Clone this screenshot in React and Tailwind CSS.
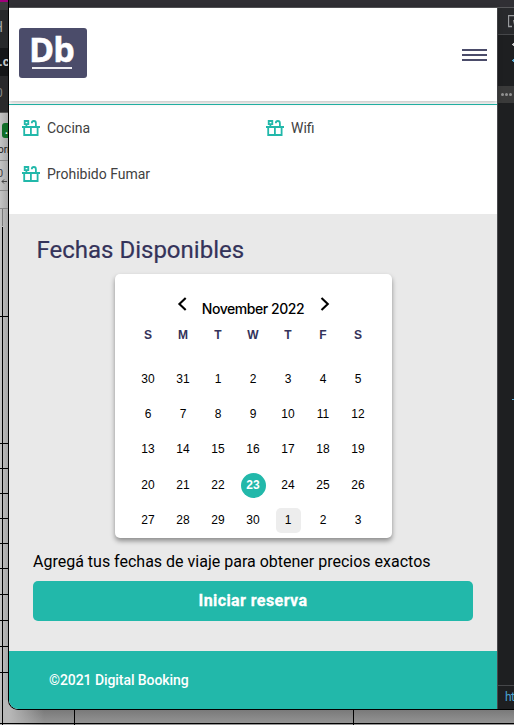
import React from "react";

const amenities = ["Cocina", "Wifi", "Prohibido Fumar"];
const weekdays = ["S", "M", "T", "W", "T", "F", "S"];
const weeks = [
  [30, 31, 1, 2, 3, 4, 5],
  [6, 7, 8, 9, 10, 11, 12],
  [13, 14, 15, 16, 17, 18, 19],
  [20, 21, 22, 23, 24, 25, 26],
  [27, 28, 29, 30, 1, 2, 3],
];

function Gift() {
  return (
    <svg width="18" height="16" viewBox="0 0 18 16" fill="none" stroke="#22b8aa" strokeWidth="1.8" className="shrink-0">
      <path d="M0 7h18" strokeWidth="2" />
      <path d="M2.2 7v8h13.4V7M8.9 7v8" />
      <path d="M2.7 1h3.6v3.2H2.7zM4.4 4v3M9.8 3.2c0-1.4.9-2.2 2.1-2.2 1.3 0 2 .8 2 2.2V7" strokeWidth="1.8" />
    </svg>
  );
}

function Chevron({ right }) {
  return (
    <svg width="10" height="14" viewBox="0 0 10 14" fill="none" stroke="#000" strokeWidth="2.1">
      <path d={right ? "M1.5 .9 7.8 7l-6.3 6.1" : "M8.7 .9 2.4 7l6.3 6.1"} />
    </svg>
  );
}

function BrowserBehind() {
  return (
    <div className="absolute inset-0 overflow-hidden bg-[#b0b0b0]">
      <div className="flex h-full w-[9px] flex-col overflow-hidden bg-linear-to-r from-[#c4c4c4] to-[#a4a4a4] font-['Roboto',sans-serif] whitespace-nowrap">
        <div className="h-[2px] bg-[#a0007c]" />
        <div className="h-[8px] bg-[#3a3b3d]" />
        <div className="h-[38px] bg-[#28292b] pt-[7px] text-[14px] leading-5 text-[#a5a5a5]"><span className="-ml-[7px]">H</span></div>
        <div className="h-[28px] bg-[#151618] pt-[4px] text-[13px] font-bold leading-5 text-[#c9c9c9]"><span className="-ml-px">.c</span></div>
        <div className="h-[37px] border-b border-[#555] bg-[#29292b] pt-[9px] text-[12px] leading-4 text-[#888]"><span className="-ml-[4px]">0</span></div>
        <div className="mt-[10px] ml-[2px] h-[15px] rounded-l-[3px] bg-[#126d29] pl-[3px] text-[10px] font-bold leading-4 text-white">.</div>
        <div className="h-[23px] border-b border-[#888] pt-[4px] text-[10px] leading-4 text-[#222]"><span className="-ml-[2px]">orr</span></div>
        <div className="h-[30px] border-b border-[#888] pt-[7px] text-[11px] leading-3 text-[#444]">
          <span className="-ml-[3px] block">0</span>
          <svg width="6" height="5" viewBox="0 0 6 5" className="mt-[-1px] ml-[1px]" fill="none" stroke="#444"><path d="M6 2.5H1M3 .5l-2 2 2 2" /></svg>
        </div>
        <div className="h-[18px] border-b border-[#888]" />
        <div className="ml-[2px] h-[17px] border-l border-[#777]" />
      </div>
      <svg className="absolute top-0 left-0" width="514" height="725" stroke="#000" strokeWidth="1" shapeRendering="crispEdges">
        <defs>
          <linearGradient id="floor" x1="0" y1="0" x2="0" y2="1">
            <stop offset="0" stopColor="#666" />
            <stop offset="1" stopColor="#979797" />
          </linearGradient>
          <linearGradient id="corner" x1="0" y1="0" x2="1" y2="0">
            <stop offset="0" stopColor="#b8b8b8" />
            <stop offset="1" stopColor="#b8b8b8" stopOpacity="0" />
          </linearGradient>
        </defs>
        <rect x="9" y="700" width="505" height="25" fill="url(#floor)" stroke="none" />
        <rect x="0" y="700" width="9" height="25" fill="#b8b8b8" stroke="none" />
        <rect x="9" y="700" width="35" height="25" fill="url(#corner)" stroke="none" />
        <path d="M2.5 227v498M74.5 700v25M353.5 700v25M0 316.5h9M0 443.5h9M0 468.5h9M0 493.5h9M0 518.5h9M0 543.5h9M0 568.5h9M0 594.5h9M0 620.5h9M0 646.5h9M0 672.5h9M0 723.5h514" fill="none" />
      </svg>
    </div>
  );
}

function DevTools() {
  return (
    <aside className="flex w-[17px] shrink-0 flex-col overflow-hidden border-l border-[#48494c] bg-[#1e1f21]">
      <div className="h-[27px] border-b border-[#46474a] bg-[#28292c] pt-[7px] pl-[10px]">
        <svg width="14" height="13" viewBox="0 0 14 13" fill="none" stroke="#999b9e">
          <path d="M14 .5H.5v11H4" strokeWidth="1.3" /><path d="M5 5h5l-4 5z" fill="#999" stroke="none" />
        </svg>
      </div>
      <svg width="16" height="51" viewBox="0 0 16 51" fill="none" strokeWidth="1.2">
        <path d="M14 9.5h2M15.5 8v3" stroke="#ccc" /><path d="M14 25.5h2M15.5 24v3" stroke="#5db0d7" />
      </svg>
      <div className="flex h-[17px] items-center gap-px bg-[#3a3a3a] pl-[3px]">
        <i className="size-[3px] rounded-full bg-[#929292]" /><i className="size-[3px] rounded-full bg-[#929292]" /><i className="size-[3px] rounded-full bg-[#929292]" />
      </div>
      <div className="mt-[296px] ml-[14px] h-px bg-[#5db0d7]" />
      <div className="mt-auto h-[24px] border-t border-[#46474a] pt-[3px] pl-[7px] font-['Roboto',sans-serif] text-[12px] leading-4 tracking-[-0.6px] text-[#4aa3d0]">ht</div>
    </aside>
  );
}

function Calendar() {
  return (
    <div className="mx-auto h-[264px] w-[277px] rounded-[5px] bg-white px-[16px] pt-[23px] font-['Liberation_Sans',Arial,sans-serif] shadow-[0_3px_5px_rgba(0,0,0,.4)]">
      <div className="flex h-[26px] justify-center gap-[15px]">
        <Chevron />
        <h3 className="w-[103px] pt-[3px] text-center font-['Inter',sans-serif] text-[14px] leading-[18px] font-medium tracking-[-0.45px] whitespace-nowrap text-black">November 2022</h3>
        <Chevron right />
      </div>
      <div className="grid w-[245px] grid-cols-7 text-center text-[12px] leading-6 font-bold text-[#34335a]">
        {weekdays.map((d, i) => <span key={i}>{d}</span>)}
      </div>
      <div className="mt-[20px] flex w-[245px] flex-col gap-[10.2px] text-[12px] text-black">
        {weeks.map((week, r) => (
          <div key={r} className="grid grid-cols-7 justify-items-center">
            {week.map((day, c) => (
              <span
                key={c}
                className={
                  r === 3 && c === 3
                    ? "size-[25px] rounded-full bg-[#22b8aa] text-center leading-[25px] font-bold text-white"
                    : r === 4 && c === 4
                      ? "size-[25px] rounded-[5px] bg-[#ededed] text-center leading-[25px]"
                      : "size-[25px] text-center leading-[25px]"
                }
              >
                {day}
              </span>
            ))}
          </div>
        ))}
      </div>
    </div>
  );
}

export default function App() {
  return (
    <div className="relative h-[725px] w-[514px] overflow-hidden">
      <BrowserBehind />
      <div className="relative flex h-[710px] w-[514px] pl-[8px]">
        <div className="flex w-[506px] flex-col overflow-hidden rounded-bl-[10px] border-b border-l border-black bg-[#1e1f21]">
          <div className="h-[8px] shrink-0 border-b border-[#58585b] bg-[#302f34]" />
          <div className="flex flex-1">
            <div className="flex w-[488px] shrink-0 flex-col bg-white font-['Roboto',sans-serif]">
              <header className="relative flex h-[93px] shrink-0 items-start justify-between bg-white pt-[20px] pr-[10px] pl-[10px] shadow-[0_1px_5px_rgba(0,0,0,.3)]">
                <div className="h-[50px] w-[68px] rounded-[3px] bg-[#4b4c6a] pt-[5px] pl-[10px] text-white">
                  <div className="h-[34px] font-['Open_Sans',sans-serif] text-[34px] leading-[32px] font-bold tracking-[-1px] [-webkit-text-stroke:0.5px_white]">Db</div>
                  <div className="ml-[3px] h-[2px] w-[40px] bg-[#eeeef2]" />
                </div>
                <div className="mt-[21px] flex w-[25px] flex-col gap-[3px]">
                  <i className="h-[2px] bg-[#4b4c6a]" />
                  <i className="h-[2px] bg-[#4b4c6a]" />
                  <i className="h-[2px] bg-[#4b4c6a]" />
                </div>
              </header>
              <ul className="mt-[3px] grid h-[110px] shrink-0 grid-cols-[244px_230px] content-start gap-y-[26px] border-t border-[#22b8aa] pt-[13px] pl-[13px]">
                {amenities.map((name) => (
                  <li key={name} className="flex h-5 items-center gap-[7px] text-[14px] text-[#414141]">
                    <Gift />
                    <span className="leading-5">{name}</span>
                  </li>
                ))}
              </ul>
              <section className="h-[437px] shrink-0 bg-[#e9e9e9] px-[24px] pt-[22px]">
                <h2 className="h-[38px] pl-[3.5px] text-[24px] leading-[28px] text-[#34335a] [-webkit-text-stroke:0.2px_#34335a]">Fechas Disponibles</h2>
                <Calendar />
                <p className="mt-[13px] h-[30px] text-[16px] leading-[21px] text-black">Agregá tus fechas de viaje para obtener precios exactos</p>
                <button className="block h-[40px] w-[440px] rounded-[5px] bg-[#22b8aa] text-[16px] font-bold tracking-[0.42px] text-white [-webkit-text-stroke:0.3px_white]">Iniciar reserva</button>
              </section>
              <footer className="flex-1 bg-[#22b8aa] pt-[19px] pl-[40px] text-[14px] leading-5 font-medium tracking-[-0.07px] text-white">©2021 Digital Booking</footer>
            </div>
            <DevTools />
          </div>
        </div>
      </div>
    </div>
  );
}
